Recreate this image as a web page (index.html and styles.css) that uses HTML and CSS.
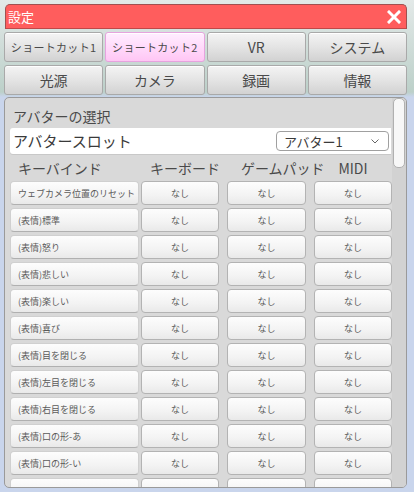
FILE: index.html
```html
<!DOCTYPE html>
<html lang="ja">
<head>
<meta charset="utf-8">
<title>設定</title>
<link rel="stylesheet" href="styles.css">
</head>
<body>
<div class="window">
  <div class="titlebar">
    <span class="title">設定</span>
    <svg class="close" viewBox="0 0 14 14" width="14" height="14"><path d="M2 2 L12 12 M12 2 L2 12" stroke="#fff" stroke-width="3" stroke-linecap="square"/></svg>
  </div>
  <div class="tabs">
    <div class="tab small">ショートカット1</div>
    <div class="tab small active">ショートカット2</div>
    <div class="tab">VR</div>
    <div class="tab">システム</div>
    <div class="tab">光源</div>
    <div class="tab">カメラ</div>
    <div class="tab">録画</div>
    <div class="tab">情報</div>
  </div>
  <div class="panel">
    <div class="content">
      <div class="section-title">アバターの選択</div>
      <div class="slot-row">
        <span class="slot-label">アバタースロット</span>
        <div class="select"><span>アバター1</span><svg class="chev" viewBox="0 0 8 5" width="8" height="5"><path d="M0.5 0.5 L4 4 L7.5 0.5" fill="none" stroke="#666" stroke-width="1"/></svg></div>
      </div>
      <div class="head">
        <div class="h-label">キーバインド</div>
        <div class="h-kb">キーボード</div>
        <div class="h-gp">ゲームパッド</div>
        <div class="h-midi">MIDI</div>
      </div>
      <div class="rows">
        <div class="row"><div class="cell label">ウェブカメラ位置のリセット</div><div class="cell kb">なし</div><div class="cell gp">なし</div><div class="cell midi">なし</div></div>
        <div class="row"><div class="cell label">(表情)標準</div><div class="cell kb">なし</div><div class="cell gp">なし</div><div class="cell midi">なし</div></div>
        <div class="row"><div class="cell label">(表情)怒り</div><div class="cell kb">なし</div><div class="cell gp">なし</div><div class="cell midi">なし</div></div>
        <div class="row"><div class="cell label">(表情)悲しい</div><div class="cell kb">なし</div><div class="cell gp">なし</div><div class="cell midi">なし</div></div>
        <div class="row"><div class="cell label">(表情)楽しい</div><div class="cell kb">なし</div><div class="cell gp">なし</div><div class="cell midi">なし</div></div>
        <div class="row"><div class="cell label">(表情)喜び</div><div class="cell kb">なし</div><div class="cell gp">なし</div><div class="cell midi">なし</div></div>
        <div class="row"><div class="cell label">(表情)目を閉じる</div><div class="cell kb">なし</div><div class="cell gp">なし</div><div class="cell midi">なし</div></div>
        <div class="row"><div class="cell label">(表情)左目を閉じる</div><div class="cell kb">なし</div><div class="cell gp">なし</div><div class="cell midi">なし</div></div>
        <div class="row"><div class="cell label">(表情)右目を閉じる</div><div class="cell kb">なし</div><div class="cell gp">なし</div><div class="cell midi">なし</div></div>
        <div class="row"><div class="cell label">(表情)口の形-あ</div><div class="cell kb">なし</div><div class="cell gp">なし</div><div class="cell midi">なし</div></div>
        <div class="row"><div class="cell label">(表情)口の形-い</div><div class="cell kb">なし</div><div class="cell gp">なし</div><div class="cell midi">なし</div></div>
        <div class="row"><div class="cell label"></div><div class="cell kb"></div><div class="cell gp"></div><div class="cell midi"></div></div>
      </div>
    </div>
    <div class="scrollbar"><div class="thumb"></div></div>
  </div>
</div>
</body>
</html>
```
FILE: styles.css
```css
html, body {
  margin: 0;
  padding: 0;
}
body {
  width: 414px;
  height: 492px;
  overflow: hidden;
  font-family: "Noto Sans CJK JP", "Noto Sans", sans-serif;
  color: #4a4a4a;
  background: linear-gradient(to bottom, #e3e9e8 0px, #bcd0c9 92px, #c9d5ec 97px, #c9d5ec 100%);
}
.window {
  margin: 4px 0 0 4px;
  width: 403px;
}
.titlebar {
  height: 23px;
  margin-left: 1px;
  background: #ff5d5d;
  border: 1px solid #a05050;
  border-bottom-color: #c04848;
  border-radius: 5px 5px 0 0;
  display: flex;
  align-items: center;
  justify-content: space-between;
  padding: 0 5px 0 2px;
}
.title {
  color: #fff;
  font-size: 13px;
  line-height: 20px;
}
.close {
  display: block;
}
.tabs {
  margin-top: 3px;
  display: grid;
  grid-template-columns: repeat(4, 1fr);
  gap: 3px 2px;
}
.tab {
  height: 28px;
  border: 1px solid #a9a9a9;
  border-radius: 3px;
  background: linear-gradient(to bottom, #f4f4f4 0%, #e4e4e4 50%, #d2d2d2 100%);
  display: flex;
  align-items: center;
  justify-content: center;
  font-size: 14px;
  color: #4a4a4a;
  box-shadow: inset 0 1px 0 #fff;
}
.tab.small {
  font-size: 11px;
  letter-spacing: 0.3px;
}
.tab.active {
  background: linear-gradient(to bottom, #ffeeff 0%, #ffd8fa 55%, #ffc6f4 100%);
  border-color: #e6a3de;
}
.panel {
  margin-top: 2px;
  height: 389px;
  border: 1px solid #9a9a9a;
  border-radius: 5px;
  background: #d9d9d9;
  display: flex;
  overflow: hidden;
}
.content {
  flex: 1;
  overflow: hidden;
  padding-left: 5px;
}
.section-title {
  height: 30px;
  box-sizing: border-box;
  padding: 6px 0 0 3px;
  line-height: 24px;
  font-size: 14px;
  color: #4a4a4a;
}
.slot-row {
  height: 26px;
  margin-bottom: 1px;
  width: 381px;
  background: #fff;
  border-radius: 3px 0 0 3px;
  display: flex;
  align-items: center;
  justify-content: space-between;
  box-shadow: 0 1px 0 #c8c8c8;
}
.slot-label {
  font-size: 15px;
  color: #3a3a3a;
  padding-left: 3px;
  line-height: 26px;
}
.select {
  height: 18px;
  margin-right: 2px;
  border: 1px solid #a0a0a0;
  border-radius: 4px;
  background: #fff;
  display: flex;
  align-items: center;
  justify-content: space-between;
  padding: 0 9px 0 7px;
  box-sizing: content-box;
  width: 95px;
  font-size: 13px;
  color: #3a3a3a;
}
.chev {
  display: block;
}
.head {
  height: 26px;
  display: flex;
  align-items: center;
  font-size: 14px;
  color: #4a4a4a;
}
.h-label {
  width: 129px;
  padding-left: 8px;
  box-sizing: border-box;
}
.h-kb {
  margin-left: 2px;
  width: 78px;
  padding-left: 9px;
  box-sizing: border-box;
  text-align: center;
  white-space: nowrap;
}
.h-gp {
  margin-left: 8px;
  width: 79px;
  padding-left: 14px;
  box-sizing: border-box;
  text-align: center;
  white-space: nowrap;
}
.h-midi {
  margin-left: 8px;
  width: 78px;
  text-align: center;
}
.rows {
  display: flex;
  flex-direction: column;
  gap: 3px;
}
.row {
  display: flex;
  height: 24px;
}
.cell {
  box-sizing: border-box;
  height: 24px;
  border: 1px solid #b3b3b3;
  border-radius: 4px;
  background: linear-gradient(to bottom, #fdfdfd 0%, #f3f3f3 60%, #e9e9e9 100%);
  display: flex;
  align-items: center;
  font-size: 9px;
  color: #5a5a5a;
  white-space: nowrap;
}
.cell.label {
  width: 129px;
  padding-left: 7px;
  border-color: #d0d0d0;
  border-bottom-color: #b0b0b0;
  font-size: 9px;
}
.cell.kb, .cell.gp, .cell.midi {
  justify-content: center;
}
.cell.kb {
  margin-left: 2px;
  width: 78px;
}
.cell.gp {
  margin-left: 8px;
  width: 79px;
}
.cell.midi {
  margin-left: 8px;
  width: 78px;
}
.scrollbar {
  width: 14px;
  background: #d2d2d2;
  flex: none;
}
.thumb {
  width: 12px;
  height: 70px;
  margin: 0 0 0 1px;
  box-sizing: border-box;
  border: 1px solid #b0b0b0;
  border-radius: 5px;
  background: #f7f7f7;
}
```
